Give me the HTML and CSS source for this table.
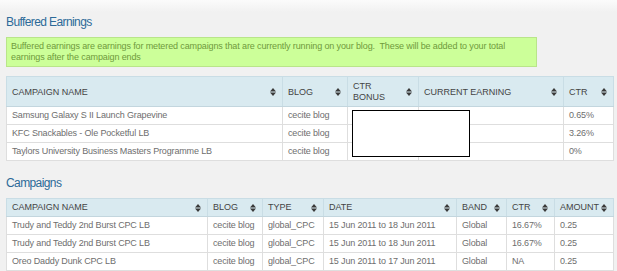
FILE: index.html
```html
<!DOCTYPE html>
<html lang="en">
<head>
    <meta charset="UTF-8">
    <title>Earnings</title>
    <link rel="stylesheet" href="styles.css">
</head>
<body>

<div class="page">
    <h2>Buffered Earnings</h2>
    <div class="notice">
        Buffered earnings are earnings for metered campaigns that are currently running on your blog.&nbsp; These will be added to your total earnings after the campaign ends
    </div>

    <div class="table-wrap">
        <table class="grid buffered">
            <colgroup>
                <col style="width:276px">
                <col style="width:65px">
                <col style="width:71px">
                <col style="width:145px">
                <col style="width:50px">
            </colgroup>
            <thead>
                <tr>
                    <th><div class="th"><span>Campaign Name</span><svg class="sort" viewBox="0 0 6 8"><path d="M0 3.5 3 0 6 3.5Z M0 4.5 3 8 6 4.5Z"/></svg></div></th>
                    <th><div class="th"><span>Blog</span><svg class="sort" viewBox="0 0 6 8"><path d="M0 3.5 3 0 6 3.5Z M0 4.5 3 8 6 4.5Z"/></svg></div></th>
                    <th><div class="th"><span>CTR<br>Bonus</span><svg class="sort" viewBox="0 0 6 8"><path d="M0 3.5 3 0 6 3.5Z M0 4.5 3 8 6 4.5Z"/></svg></div></th>
                    <th><div class="th"><span>Current Earning</span><svg class="sort" viewBox="0 0 6 8"><path d="M0 3.5 3 0 6 3.5Z M0 4.5 3 8 6 4.5Z"/></svg></div></th>
                    <th><div class="th"><span>CTR</span><svg class="sort" viewBox="0 0 6 8"><path d="M0 3.5 3 0 6 3.5Z M0 4.5 3 8 6 4.5Z"/></svg></div></th>
                </tr>
            </thead>
            <tbody>
                <tr><td>Samsung Galaxy S II Launch Grapevine</td><td>cecite blog</td><td></td><td></td><td>0.65%</td></tr>
                <tr><td>KFC Snackables - Ole Pocketful LB</td><td>cecite blog</td><td></td><td></td><td>3.26%</td></tr>
                <tr><td>Taylors University Business Masters Programme LB</td><td>cecite blog</td><td></td><td></td><td>0%</td></tr>
            </tbody>
        </table>
        <div class="blank"></div>
    </div>

    <h2 class="campaigns-title">Campaigns</h2>
    <table class="grid">
        <colgroup>
            <col style="width:201px">
            <col style="width:55px">
            <col style="width:61px">
            <col style="width:133px">
            <col style="width:50px">
            <col style="width:48px">
            <col style="width:59px">
        </colgroup>
        <thead>
            <tr>
                <th><div class="th"><span>Campaign Name</span><svg class="sort" viewBox="0 0 6 8"><path d="M0 3.5 3 0 6 3.5Z M0 4.5 3 8 6 4.5Z"/></svg></div></th>
                <th><div class="th"><span>Blog</span><svg class="sort" viewBox="0 0 6 8"><path d="M0 3.5 3 0 6 3.5Z M0 4.5 3 8 6 4.5Z"/></svg></div></th>
                <th><div class="th"><span>Type</span><svg class="sort" viewBox="0 0 6 8"><path d="M0 3.5 3 0 6 3.5Z M0 4.5 3 8 6 4.5Z"/></svg></div></th>
                <th><div class="th"><span>Date</span><svg class="sort" viewBox="0 0 6 8"><path d="M0 3.5 3 0 6 3.5Z M0 4.5 3 8 6 4.5Z"/></svg></div></th>
                <th><div class="th"><span>Band</span><svg class="sort" viewBox="0 0 6 8"><path d="M0 3.5 3 0 6 3.5Z M0 4.5 3 8 6 4.5Z"/></svg></div></th>
                <th><div class="th"><span>CTR</span><svg class="sort" viewBox="0 0 6 8"><path d="M0 3.5 3 0 6 3.5Z M0 4.5 3 8 6 4.5Z"/></svg></div></th>
                <th><div class="th"><span>Amount</span><svg class="sort" viewBox="0 0 6 8"><path d="M0 3.5 3 0 6 3.5Z M0 4.5 3 8 6 4.5Z"/></svg></div></th>
            </tr>
        </thead>
        <tbody>
            <tr><td>Trudy and Teddy 2nd Burst CPC LB</td><td>cecite blog</td><td>global_CPC</td><td>15 Jun 2011 to 18 Jun 2011</td><td>Global</td><td>16.67%</td><td>0.25</td></tr>
            <tr><td>Trudy and Teddy 2nd Burst CPC LB</td><td>cecite blog</td><td>global_CPC</td><td>15 Jun 2011 to 18 Jun 2011</td><td>Global</td><td>16.67%</td><td>0.25</td></tr>
            <tr><td>Oreo Daddy Dunk CPC LB</td><td>cecite blog</td><td>global_CPC</td><td>15 Jun 2011 to 17 Jun 2011</td><td>Global</td><td>NA</td><td>0.25</td></tr>
        </tbody>
    </table>
</div>

</body>
</html>
```

FILE: styles.css
```css
body {
    margin: 0;
    font-family: "Liberation Sans", Arial, sans-serif;
    background: linear-gradient(#fbfbfb, #f1f1f1 12px) #f1f1f1;
    color: #6e6e6e;
}
.page {
    padding: 0 4px 0 6px;
    overflow: hidden;
}
h2 {
    margin: 15px 0 0;
    font-size: 12px;
    line-height: 14px;
    font-weight: normal;
    letter-spacing: -0.6px;
    color: #2c6a98;
}
.notice {
    box-sizing: border-box;
    width: 531px;
    margin-top: 8px;
    padding: 3px 5px 3px 4px;
    border: 1px solid #b9e58a;
    background-color: #ccff99;
    color: #6f9a3c;
    font-size: 9px;
    line-height: 11px;
    letter-spacing: -0.12px;
}
.table-wrap {
    position: relative;
    margin-top: 9px;
}
.grid {
    width: 607px;
    table-layout: fixed;
    border-collapse: collapse;
    font-size: 9px;
    line-height: 11px;
}
.grid th, .grid td {
    padding: 3px 5px;
    text-align: left;
    white-space: nowrap;
    overflow: hidden;
}
.grid th {
    background-color: #d9eaf0;
    border: 1px solid #c9dde5;
    border-bottom-color: #c3d6de;
    color: #444;
    font-weight: normal;
    text-transform: uppercase;
    padding-right: 6px;
}
.buffered th {
    padding-top: 4px;
}
.grid td {
    background-color: #fff;
    border: 1px solid #dedede;
    letter-spacing: -0.15px;
}
.th {
    display: flex;
    justify-content: space-between;
    align-items: center;
}
.sort {
    width: 6px;
    height: 8px;
    flex: none;
    fill: #3a3a3a;
}
.blank {
    position: absolute;
    left: 346px;
    top: 34px;
    width: 118px;
    height: 47px;
    box-sizing: border-box;
    border: 1px solid #000;
    background-color: #fff;
}
.campaigns-title {
    margin-top: 15px;
    margin-bottom: 8px;
}
```
